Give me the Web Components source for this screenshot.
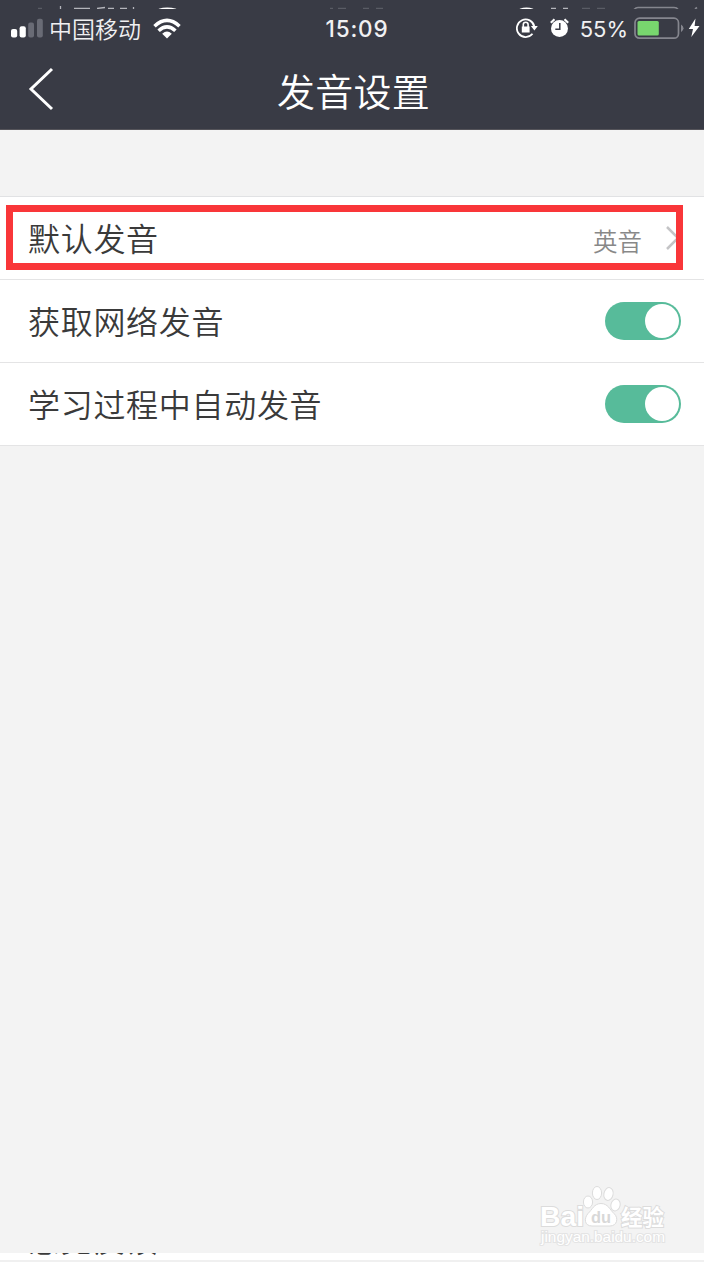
<!DOCTYPE html>
<html lang="zh-CN">
<head>
<meta charset="utf-8">
<title>发音设置</title>
<style>
  body {
    margin: 0;
    background: #f3f3f3;
    font-family: "Liberation Sans", "Noto Sans CJK SC", sans-serif;
  }
</style>
</head>
<body>
<pron-screen>
  <nav-header>发音设置</nav-header>
  <settings-list>
    <settings-row label="默认发音" value="英音" marked></settings-row>
    <settings-row label="获取网络发音" toggle></settings-row>
    <settings-row label="学习过程中自动发音" toggle></settings-row>
  </settings-list>
  <next-strip slot="bottom">意见反馈</next-strip>
  <site-mark slot="bottom"></site-mark>
</pron-screen>

<script>
'use strict';

class PronScreen extends HTMLElement {
  constructor() {
    super();
    this.root = this.attachShadow({mode: 'open'});
  }
  connectedCallback() {
    this.root.innerHTML = `
    <style>
      :host {
        display: flex;
        flex-direction: column;
        position: relative;
        width: 704px;
        height: 1262px;
        overflow: hidden;
        background: #f3f3f3;
      }
      .rest {
        flex: 1;
      }
    </style>
    <slot></slot>
    <div class="rest"></div>
    <slot name="bottom"></slot>
    `;
  }
}
customElements.define('pron-screen', PronScreen);

class StatusBar extends HTMLElement {
  constructor() {
    super();
    this.root = this.attachShadow({mode: 'open'});
  }
  connectedCallback() {
    this.root.innerHTML = `
    <style>
      :host {
        display: grid;
        grid-template-columns: 1fr auto 1fr;
        align-items: center;
        height: 38px;
        padding: 0 4px 0 11px;
        box-sizing: border-box;
        color: #f0f0f2;
        white-space: nowrap;
      }
      svg {
        display: block;
        flex: none;
      }
      .side {
        display: flex;
        align-items: center;
        height: 38px;
      }
      .carrier {
        margin: 0 0 0 6px;
        font: 350 23px/36px "Noto Sans CJK SC", sans-serif;
      }
      .wifi {
        margin-left: 12px;
      }
      .time {
        margin: 1px 0 0 3px;
        font: 500 22.500px/36px Inter, sans-serif;
        letter-spacing: .8px;
      }
      .right {
        justify-content: flex-end;
      }
      .alarm {
        margin-left: 12px;
      }
      .percent {
        margin: 1px 6px 0 11px;
        font: 22px/36px Inter, sans-serif;
      }
      .bolt {
        margin-left: 4px;
      }
    </style>
    <div class="side">
      <svg width="32" height="20" viewBox="0 0 32 20">
        <rect x="0" y="11" width="6.200" height="8.500" rx="2" fill="#fff"/>
        <rect x="8.600" y="8.300" width="6.200" height="11.200" rx="2" fill="#fff"/>
        <rect x="17.200" y="4.600" width="5.800" height="14.900" rx="2" fill="#696b75"/>
        <rect x="26" y=".7" width="5.800" height="18.800" rx="2" fill="#696b75"/>
      </svg>
      <span class="carrier">中国移动</span>
      <svg class="wifi" width="28" height="21" viewBox="0 0 28 21">
        <g fill="none" stroke="#fff" stroke-width="3.600">
          <path d="M1.500 8.200Q14-3.400 26.500 8.200"/>
          <path d="M5.600 12.800Q14 5 22.400 12.800"/>
        </g>
        <path fill="#fff" d="M9.200 15.800Q14 11.400 18.800 15.800L14 20.500Z"/>
      </svg>
    </div>
    <span class="time">15:09</span>
    <div class="side right">
      <svg width="22" height="22" viewBox="0 0 22 22">
        <path fill="none" stroke="#fff" stroke-width="1.800" d="M16.500 16.800A8.800 8.800 0 1 1 18.300 9.500"/>
        <path fill="#fff" d="M14.900 9H21.800L18.400 13.400ZM5.800 9.500H13.600V15.500H5.800Z"/>
        <path fill="none" stroke="#fff" stroke-width="1.600" d="M7.300 10V7.600A2.400 2.400 0 0 1 12.100 7.600V10"/>
      </svg>
      <svg class="alarm" width="19" height="20" viewBox="0 0 19 20">
        <circle cx="9.500" cy="10.500" r="8.500" fill="#fff"/>
        <path fill="none" stroke="#fff" stroke-width="2.200" d="M.8 4.700L4.500 1.300M14.500 1.300L18.200 4.700"/>
        <path fill="none" stroke="#393b45" stroke-width="1.500" d="M9.800 5V11.200H5.300"/>
      </svg>
      <span class="percent">55%</span>
      <svg width="50" height="23" viewBox="0 0 50 23">
        <rect x="1" y="1.200" width="43.500" height="20" rx="4.500" fill="none" stroke="#85868e" stroke-width="1.700"/>
        <rect x="3.500" y="4" width="21.300" height="14.500" rx="1.500" fill="#78d66e"/>
        <path fill="#85868e" d="M47 7.500Q49.500 9 49.500 11.300T47 15.200Z"/>
      </svg>
      <svg class="bolt" width="12" height="20" viewBox="0 0 12 20">
        <path fill="#fff" d="M7.500 .5L.8 11H5L3.300 19L11.500 8H6.600Z"/>
      </svg>
    </div>
    `;
  }
}
customElements.define('status-bar', StatusBar);

class NavHeader extends HTMLElement {
  constructor() {
    super();
    this.root = this.attachShadow({mode: 'open'});
  }
  connectedCallback() {
    this.root.innerHTML = `
    <style>
      :host {
        display: block;
        height: 130px;
        box-sizing: border-box;
        overflow: hidden;
        background: #393b45;
        border-bottom: 1px solid #55545a;
      }
      .sliver {
        display: block;
      }
      .bar {
        display: grid;
        grid-template-columns: 80px 1fr 80px;
        align-items: center;
        height: 82px;
      }
      .back {
        display: block;
        margin: 1px 0 0 28px;
      }
      .title {
        margin: 4px 0 0 3px;
        text-align: center;
        color: #fff;
        font: 350 38px/56px "Noto Sans CJK SC", sans-serif;
        letter-spacing: .2px;
      }
    </style>
    <!-- sliver of the previous frame above the live status bar -->
    <svg class="sliver" width="704" height="9" viewBox="0 0 704 9">
      <g fill="none" stroke="#b4b5bb" stroke-width="1.300">
        <path d="M60.500 6V9M74 8.300H90M97 8.500L105 7.500M108 8.300H114M120 8.300H127M133.500 7V9"/>
        <path stroke="#fff" stroke-width="1.600" d="M159 9.500Q167 7 176 9.500M520 9.500Q526.500 7 533 9.500"/>
        <path d="M551 8.500H556M563 8.500H568"/>
        <path stroke="#85868e" stroke-width="1.600" d="M634 9.500Q636 7.500 638 7.500H674Q677 7.500 678 9.500M695 9L697 7.500"/>
        <path stroke="#5a5c65" d="M38 8.500H42M330 8.500H333M338 8.500H346M363 8.500H369M376 8.500H383M582 8.500H590M597 8.500H605"/>
      </g>
    </svg>
    <status-bar></status-bar>
    <div class="bar">
      <svg class="back" width="28" height="44" viewBox="0 0 28 44">
        <path fill="none" stroke="#fff" stroke-width="3" d="M24 2L3 22L24 42"/>
      </svg>
      <div class="title"><slot></slot></div>
    </div>
    `;
  }
}
customElements.define('nav-header', NavHeader);

class SettingsList extends HTMLElement {
  constructor() {
    super();
    this.root = this.attachShadow({mode: 'open'});
  }
  connectedCallback() {
    this.root.innerHTML = `
    <style>
      :host {
        display: block;
        margin-top: 66px;
        border-top: 1px solid #e1e2e4;
      }
    </style>
    <slot></slot>
    `;
  }
}
customElements.define('settings-list', SettingsList);

class ToggleSwitch extends HTMLElement {
  constructor() {
    super();
    this.root = this.attachShadow({mode: 'open'});
  }
  connectedCallback() {
    this.root.innerHTML = `
    <style>
      :host {
        display: flex;
        justify-content: flex-end;
        width: 76px;
        height: 38px;
        padding: 2px;
        box-sizing: border-box;
        border-radius: 19px;
        background: #57bb9a;
      }
      .knob {
        width: 34px;
        height: 34px;
        border-radius: 50%;
        background: #fff;
      }
    </style>
    <div class="knob"></div>
    `;
  }
}
customElements.define('toggle-switch', ToggleSwitch);

class SettingsRow extends HTMLElement {
  constructor() {
    super();
    this.root = this.attachShadow({mode: 'open'});
  }
  get control() {
    if (this.hasAttribute('toggle')) {
      return '<toggle-switch></toggle-switch>';
    }
    return `
      <span class="value">${this.getAttribute('value')}</span>
      <svg class="arrow" width="16" height="26" viewBox="0 0 16 26">
        <path fill="none" stroke="#c4c4c6" stroke-width="2.500" d="M2 2L13 13L2 24"/>
      </svg>`;
  }
  connectedCallback() {
    this.root.innerHTML = `
    <style>
      :host {
        display: flex;
        align-items: center;
        position: relative;
        height: 83px;
        padding: 0 23px 0 28px;
        box-sizing: border-box;
        background: #fff;
        border-bottom: 1px solid #e4e4e5;
        font-family: "Noto Sans CJK SC", sans-serif;
      }
      .label {
        flex: 1;
        margin-top: -2px;
        color: #3a3a3a;
        font-size: 32px;
        font-weight: 350;
        line-height: 48px;
        letter-spacing: .7px;
      }
      .value {
        margin: 5px 23px 0 0;
        color: #888;
        font-size: 24.500px;
        font-weight: 350;
        line-height: 36px;
      }
      .arrow {
        display: block;
      }
      .mark {
        position: absolute;
        left: 6px;
        top: 8px;
        width: 677px;
        height: 65px;
        box-sizing: border-box;
        border: 7px solid #f93639;
      }
    </style>
    <span class="label">${this.getAttribute('label')}</span>
    ${this.control}
    ${this.hasAttribute('marked') ? '<div class="mark"></div>' : ''}
    `;
  }
}
customElements.define('settings-row', SettingsRow);

class NextStrip extends HTMLElement {
  constructor() {
    super();
    this.root = this.attachShadow({mode: 'open'});
  }
  connectedCallback() {
    this.root.innerHTML = `
    <style>
      :host {
        display: block;
        height: 9px;
        background: #fff;
      }
      .clip {
        display: flex;
        align-items: flex-end;
        height: 7px;
        overflow: hidden;
        border-bottom: 2px solid #f0f0f0;
      }
      .text {
        margin: 0 0 -2px 28px;
        color: #3a3a3a;
        font: 350 32px/48px "Noto Sans CJK SC", sans-serif;
        letter-spacing: .7px;
      }
    </style>
    <div class="clip"><span class="text"><slot></slot></span></div>
    `;
  }
}
customElements.define('next-strip', NextStrip);

class SiteMark extends HTMLElement {
  constructor() {
    super();
    this.root = this.attachShadow({mode: 'open'});
  }
  connectedCallback() {
    this.root.innerHTML = `
    <style>
      :host {
        display: block;
        position: absolute;
        left: 536px;
        top: 1182px;
      }
      svg {
        display: block;
      }
      text {
        font-family: "Liberation Sans", "Noto Sans CJK SC", sans-serif;
        font-weight: 700;
        paint-order: stroke;
      }
      .url {
        font-weight: 400;
      }
    </style>
    <svg width="140" height="70" viewBox="0 0 140 70" fill="#fff" stroke="#dcdcdc" stroke-width="2">
      <g stroke-width="1">
        <ellipse cx="52" cy="20" rx="4.600" ry="6"/>
        <ellipse cx="61" cy="11" rx="4.600" ry="6.500"/>
        <ellipse cx="72.500" cy="12" rx="4.600" ry="6.500" transform="rotate(12 72.500 12)"/>
        <ellipse cx="79.500" cy="23" rx="4.600" ry="6" transform="rotate(15 79.500 23)"/>
        <path d="M65 21.500C72 21.500 74 28 78 31.500C83 36 81 44 74 44H56C48 44 48 36 52 31.500C56 28 58 21.500 65 21.500Z"/>
      </g>
      <text x="4" y="43.500" font-size="27.500" textLength="44" lengthAdjust="spacingAndGlyphs">Bai</text>
      <text x="55" y="40.500" font-size="17" fill="#d8d8d8" stroke="none" textLength="20" lengthAdjust="spacingAndGlyphs">du</text>
      <text x="85" y="42.500" font-size="22" textLength="43" lengthAdjust="spacingAndGlyphs">经验</text>
      <text class="url" x="5" y="60" font-size="14" stroke="#e4e4e4" textLength="124" lengthAdjust="spacingAndGlyphs">jingyan.baidu.com</text>
    </svg>
    `;
  }
}
customElements.define('site-mark', SiteMark);
</script>
</body>
</html>
